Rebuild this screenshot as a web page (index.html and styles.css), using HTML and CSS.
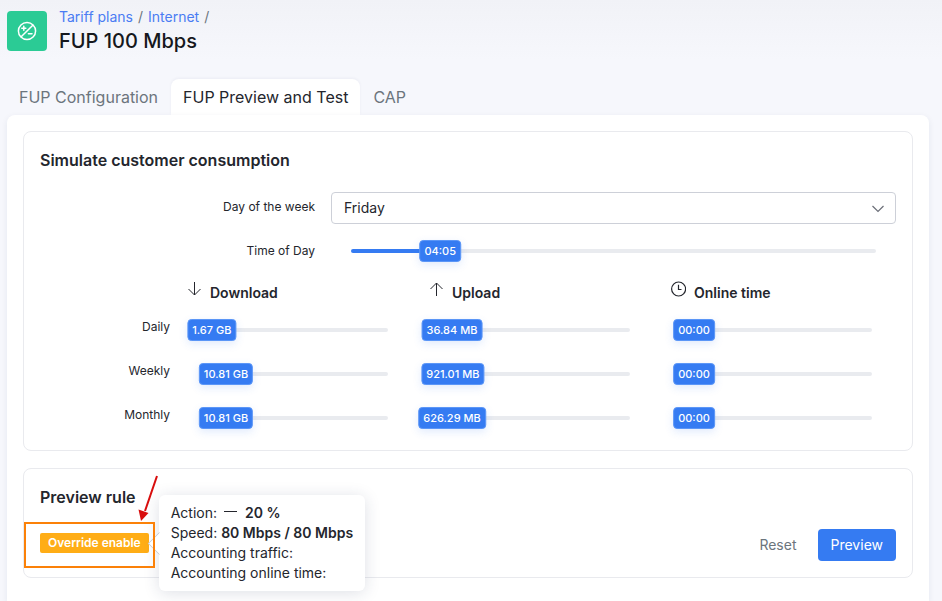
FILE: index.html
```
<!DOCTYPE html>
<html lang="en">
<head>
<meta charset="utf-8">
<title>FUP 100 Mbps</title>
<link rel="stylesheet" href="styles.css">
</head>
<body>
<header class="page-header">
  <div class="page-icon">
    <svg width="20" height="20" viewBox="0 0 20 20" fill="none" stroke="currentColor" stroke-width="1.5" stroke-linecap="round" aria-hidden="true">
      <circle cx="10" cy="10" r="8.6"/>
      <path d="M4.2 15.8 15.8 4.2M4.8 7.2h4M6.8 5.2v4M11.4 12.8h3.6"/>
    </svg>
  </div>
  <div>
    <nav class="breadcrumb" aria-label="Breadcrumb">
      <a href="#">Tariff plans</a><span>/</span><a href="#">Internet</a><span>/</span>
    </nav>
    <h1 class="page-title">FUP 100 Mbps</h1>
  </div>
</header>

<nav class="tabs">
  <a class="tab" href="#">FUP Configuration</a>
  <a class="tab tab-active" href="#" aria-current="page">FUP Preview and Test</a>
  <a class="tab" href="#">CAP</a>
</nav>

<main class="panel">
  <section class="card">
    <h2 class="card-title">Simulate customer consumption</h2>
    <div class="field">
      <label class="label" for="day">Day of the week</label>
      <div class="select">
        <select id="day"><option>Friday</option><option>Saturday</option><option>Sunday</option></select>
        <svg class="chevron" width="14" height="8" viewBox="0 0 14 8" fill="none" stroke="currentColor" stroke-width="1.2" aria-hidden="true"><path d="M1.500 1l5.500 5.500L12.500 1"/></svg>
      </div>
    </div>
    <div class="field">
      <label class="label" for="time">Time of Day</label>
      <div class="slider slider-wide" style="--pos: 17%">
        <input type="range" id="time" min="0" max="1440" value="245"><output for="time">04:05</output>
      </div>
    </div>

    <div class="usage">
      <h3 class="usage-head usage-first">
        <svg width="16" height="16" viewBox="0 0 16 16" fill="none" stroke="currentColor" aria-hidden="true"><path d="M8.5 1v13M2.5 8l6 6 6-6"/></svg>Download</h3>
      <h3 class="usage-head">
        <svg width="16" height="16" viewBox="0 0 16 16" fill="none" stroke="currentColor" aria-hidden="true"><path d="M8.5 15V2M2.5 8l6-6 6 6"/></svg>Upload</h3>
      <h3 class="usage-head">
        <svg width="16" height="16" viewBox="0 0 16 16" fill="none" stroke="currentColor" stroke-width="1.2" aria-hidden="true"><circle cx="8.600" cy="8" r="7"/><path d="M8.500 3.800v4.700h3"/></svg>Online time</h3>

      <span class="label">Daily</span>
      <div class="slider" style="--pos: 1%"><input type="range" id="dd" aria-label="Daily download" value="1"><output for="dd">1.67 GB</output></div>
      <div class="slider" style="--pos: 0%"><input type="range" id="du" aria-label="Daily upload" value="0"><output for="du">36.84 MB</output></div>
      <div class="slider" style="--pos: 0%"><input type="range" id="dt" aria-label="Daily online time" value="0"><output for="dt">00:00</output></div>

      <span class="label">Weekly</span>
      <div class="slider" style="--pos: 9%"><input type="range" id="wd" aria-label="Weekly download" value="9"><output for="wd">10.81 GB</output></div>
      <div class="slider" style="--pos: 0.5%"><input type="range" id="wu" aria-label="Weekly upload" step="0.5" value="0.5"><output for="wu">921.01 MB</output></div>
      <div class="slider" style="--pos: 0%"><input type="range" id="wt" aria-label="Weekly online time" value="0"><output for="wt">00:00</output></div>

      <span class="label">Monthly</span>
      <div class="slider" style="--pos: 9%"><input type="range" id="md" aria-label="Monthly download" value="9"><output for="md">10.81 GB</output></div>
      <div class="slider" style="--pos: 0%"><input type="range" id="mu" aria-label="Monthly upload" value="0"><output for="mu">626.29 MB</output></div>
      <div class="slider" style="--pos: 0%"><input type="range" id="mt" aria-label="Monthly online time" value="0"><output for="mt">00:00</output></div>
    </div>
  </section>

  <section class="card">
    <h2 class="card-title">Preview rule</h2>
    <div class="rule">
      <div class="badge-wrap">
        <span class="badge" aria-describedby="rule-tip">Override enable</span>
        <div class="tooltip" id="rule-tip" role="tooltip">
          <p>Action: <svg width="14" height="10" viewBox="0 0 14 10" stroke="currentColor" role="img" aria-label="minus"><path d="M0 3.5h13"/></svg> <b>20 %</b></p>
          <p>Speed: <b>80 Mbps / 80 Mbps</b></p>
          <p>Accounting traffic:</p>
          <p>Accounting online time:</p>
        </div>
        <span class="highlight"></span>
        <svg class="pointer" width="24" height="48" viewBox="0 0 24 48" aria-hidden="true"><path d="M20 1 8 36" stroke="#d80d0d" stroke-width="2"/><path d="M1.5 34.5 11.5 38 4 46z" fill="#d80d0d"/></svg>
      </div>
      <div class="actions">
        <button class="btn" type="button">Reset</button>
        <button class="btn btn-primary" type="button">Preview</button>
      </div>
    </div>
  </section>
</main>
</body>
</html>
```
FILE: styles.css
```
:root {
  --blue: #357bf2;
  --text: #24262d;
  --muted: #6c757d;
  --line: #e9eaee;
}

* { box-sizing: border-box; }

html { background: #f6f7fc; }

body {
  margin: 0;
  min-height: 100vh;
  display: flex;
  flex-direction: column;
  overflow-x: hidden;
  background: linear-gradient(#f1f2f7, #f6f7fc 60px);
  color: var(--text);
  font: 400 14px/20px Inter, "Liberation Sans", sans-serif;
}

h1, h2, h3, p { margin: 0; }

a { text-decoration: none; }

.page-header {
  display: flex;
  gap: 12px;
  padding: 7px 7px 0;
}

.page-icon {
  display: grid;
  place-items: center;
  width: 40px;
  height: 40px;
  margin-top: 4px;
  border-radius: 4px;
  background: #2bcb95;
  color: #fff;
}

.breadcrumb {
  display: flex;
  gap: 5px;
  color: var(--muted);
}

.breadcrumb a { color: #4a7cf3; }

.page-title {
  font-size: 20px;
  font-weight: 500;
  line-height: 28px;
  color: #16181d;
}

.tabs {
  display: flex;
  gap: 1px;
  padding: 0 7px;
  margin-top: 24px;
}

.tab {
  padding: 6px 12px;
  border-radius: 8px 8px 0 0;
  color: var(--muted);
  font-size: 16px;
  line-height: 24px;
}

.tab-active {
  background: #fff;
  color: var(--text);
  box-shadow: 0 -1px 3px #1f2d5a0d;
}

.panel {
  flex: 1;
  position: relative;
  display: flex;
  flex-direction: column;
  gap: 17px;
  margin: 0 13px 0 7px;
  padding: 16px;
  border-radius: 8px 8px 0 0;
  background: #fff;
  box-shadow: 0 2px 6px #1f2d5a14;
}

.card {
  display: flex;
  flex-direction: column;
  gap: 12px;
  padding: 16px;
  border: 1px solid var(--line);
  border-radius: 8px;
}

.card-title {
  margin-bottom: 8px;
  font-size: 16px;
  font-weight: 600;
  line-height: 24px;
}

.field {
  display: grid;
  grid-template-columns: 275fr 565fr;
  gap: 16px;
}

.label {
  padding-top: 5px;
  text-align: right;
  font-size: 12px;
  line-height: 20px;
}

.select { position: relative; }

.select select {
  display: block;
  width: 100%;
  height: 32px;
  padding: 0 12px;
  appearance: none;
  border: 1px solid #cdd0d8;
  border-radius: 4px;
  background: #fff;
  color: inherit;
  font: inherit;
}

.chevron {
  position: absolute;
  top: 13px;
  right: 11px;
  color: #6b6e78;
  pointer-events: none;
}

.slider {
  position: relative;
  height: 32px;
  margin: 0 24px;
}

.slider-wide {
  height: 30px;
  margin: 0 20px;
}

.slider input {
  display: block;
  width: 100%;
  height: 100%;
  margin: 0;
  appearance: none;
  background: none;
}

.slider input::-webkit-slider-runnable-track {
  height: 4px;
  border-radius: 2px;
  background: linear-gradient(to right, var(--blue) var(--pos), #e9ebef var(--pos));
}

.slider input::-webkit-slider-thumb {
  appearance: none;
  width: 1px;
  height: 4px;
}

.slider output {
  position: absolute;
  top: 50%;
  left: var(--pos);
  transform: translate(-50%, -50%);
  padding: 1px 4px;
  border: 1px solid #5b96f7;
  border-radius: 4px;
  background: var(--blue);
  box-shadow: 0 3px 8px #357bf226;
  color: #fff;
  font-size: 11px;
  font-weight: 500;
  line-height: 18px;
  white-space: nowrap;
  pointer-events: none;
}

.usage {
  display: grid;
  grid-template-columns: 130fr repeat(3, 226fr);
  gap: 12px 16px;
}

.usage-head {
  display: flex;
  align-items: flex-end;
  gap: 8px;
  height: 24px;
  font-size: 14px;
  font-weight: 600;
  line-height: 18px;
}

.usage-head svg { margin-bottom: 5px; }

.usage-first { grid-column: 2; }

.usage .label { padding-top: 3px; }

.rule {
  display: flex;
  justify-content: space-between;
}

.badge-wrap {
  position: relative;
  align-self: flex-start;
  padding-top: 4px;
}

.badge {
  display: block;
  padding: 0 8px;
  border-radius: 2px;
  background: #ffad16;
  color: #fff;
  font-size: 12px;
  font-weight: 600;
  line-height: 20px;
}

.highlight {
  position: absolute;
  inset: -7px -6px -15px -16px;
  border: 2px solid #fb8108;
}

.pointer {
  position: absolute;
  left: 97px;
  top: -54px;
}

.tooltip {
  position: absolute;
  left: calc(100% + 10px);
  top: -34px;
  padding: 8px 12px;
  border-radius: 6px;
  background: #fff;
  box-shadow: 0 2px 16px #1f2d5a26;
  white-space: nowrap;
}

.tooltip::before {
  content: "";
  position: absolute;
  left: -8px;
  top: 40px;
  width: 16px;
  height: 16px;
  border: solid #c8cad0;
  border-width: 0 0 1px 1px;
  background: #fff;
  transform: rotate(45deg);
  clip-path: polygon(0 0, 100% 100%, 0 100%);
}

.tooltip b { font-weight: 600; }

.tooltip svg { margin: 0 3px; }

.actions {
  display: flex;
  gap: 8px;
}

.btn {
  height: 32px;
  padding: 0 13px;
  border: 0;
  border-radius: 4px;
  background: none;
  color: var(--muted);
  font: inherit;
}

.btn-primary {
  background: var(--blue);
  color: #fff;
}
```
